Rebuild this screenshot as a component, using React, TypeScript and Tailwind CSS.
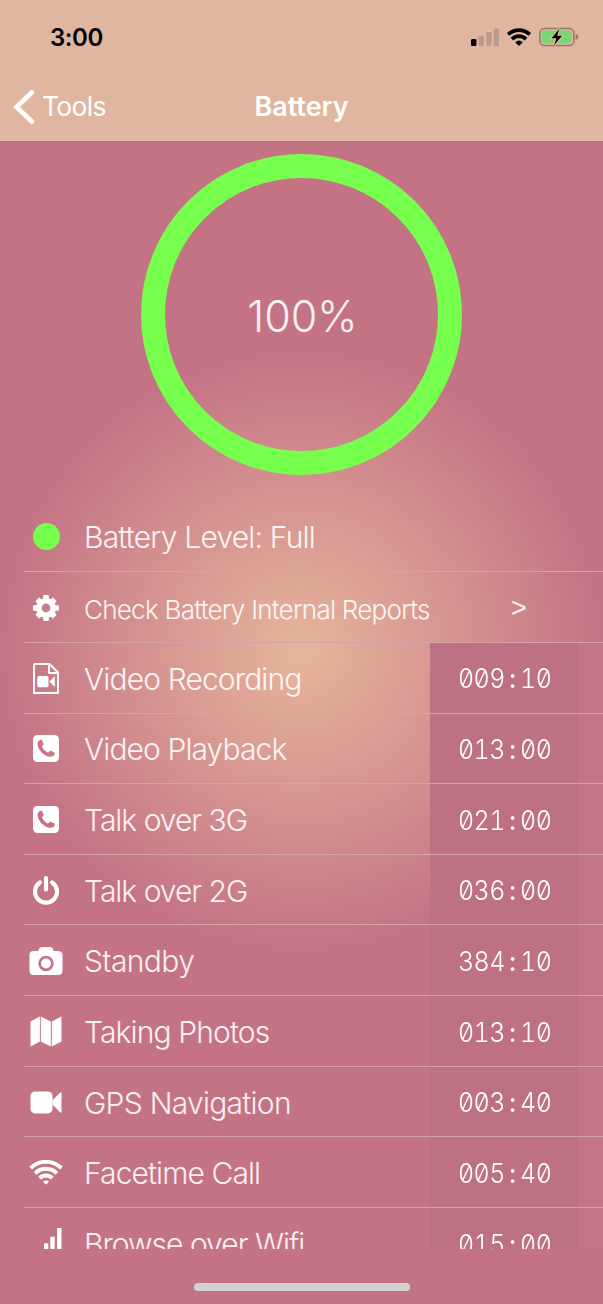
import type { ReactNode } from "react";

const Gear = () => (
  <svg viewBox="0 0 26 26" className="h-[26px] w-[26px]">
    <mask id="gear-hole" maskUnits="userSpaceOnUse" x="0" y="0" width="26" height="26">
      <rect width="26" height="26" fill="#fff" />
      <circle cx="13" cy="13" r="4.4" fill="#000" />
    </mask>
    <g fill="#fff" mask="url(#gear-hole)">
      {[0, 45, 90, 135].map((a) => (
        <rect key={a} x="10.2" y={a % 90 ? 0.6 : 0} width="5.6" height={a % 90 ? 24.8 : 26} rx="1" transform={`rotate(${a} 13 13)`} />
      ))}
      <circle cx="13" cy="13" r="9.9" />
    </g>
  </svg>
);

const VideoFile = () => (
  <svg viewBox="0 0 26 31" className="h-[31px] w-[26px]">
    <path d="M2 1H16.5L25 9.5V30H1V2Q1 1 2 1ZM16 1.5V10H24.5" fill="none" stroke="#fff" strokeWidth="1.9" strokeLinejoin="round" />
    <rect x="4.3" y="13.1" width="11.2" height="11.2" rx="1.8" fill="#fff" />
    <path d="M16.4 18.6L21.8 13.2V24Z" fill="#fff" />
  </svg>
);

const PhoneSquare = () => (
  <svg viewBox="0 0 26 27" className="h-[27px] w-[26px]">
    <path
      fillRule="evenodd"
      fill="#fff"
      d="M5 0H21Q26 0 26 5V22Q26 27 21 27H5Q0 27 0 22V5Q0 0 5 0ZM6.9 5C5.3 5.6 4.4 7.4 4.6 9.4C5.1 13.4 7.6 17 11 19.4C13.6 21.2 16.5 22.1 18.8 21.6C20.6 21.2 21.7 19.9 21.7 18.2C21.7 17.6 21.2 17.4 20.4 17L18 15.8C17.1 15.4 16.8 15.9 16.2 16.6C15.4 17.5 15.1 17.7 14.2 17.2C12.1 16 10.3 14.1 9.2 12C8.8 11.2 9.1 10.9 9.9 10.2C10.5 9.7 10.8 9.4 10.5 8.6L9.3 5.7C9 4.9 8.8 4.6 8.3 4.6C7.8 4.6 7.4 4.8 6.9 5Z"
    />
  </svg>
);

const Power = () => (
  <svg viewBox="0 0 26 29" className="h-[29px] w-[26px]">
    <path d="M6.9 6.4A11 11 0 1 0 19.1 6.4" fill="none" stroke="#fff" strokeWidth="4.2" strokeLinecap="round" />
    <path d="M13 2.2V13.4" stroke="#fff" strokeWidth="4.2" strokeLinecap="round" />
  </svg>
);

const Camera = () => (
  <svg viewBox="0 0 34 28" className="h-[28px] w-[34px]">
    <path
      fillRule="evenodd"
      fill="#fff"
      d="M4.5 4H9.2L10.3 1.5Q10.9 0 12.5 0H21.5Q23.1 0 23.7 1.5L24.8 4H29Q33.5 4 33.5 8.2V24Q33.5 28 29 28H4.5Q.5 28 .5 24V8.2Q.5 4 4.5 4ZM17 8.8A7.7 7.7 0 1 0 17 24.2A7.7 7.7 0 1 0 17 8.8Z"
    />
    <circle cx="17" cy="16.5" r="5" fill="#fff" />
  </svg>
);

const MapIcon = () => (
  <svg viewBox="0 0 32 31" className="h-[31px] w-[32px]">
    <path fill="#fff" d="M.5 5.6L9.9.5V25.6L.5 30.6ZM10.8 .5L20.8 5.6V30.6L10.8 25.6ZM21.8 5.6L31.5.5V25.6L21.8 30.6Z" />
  </svg>
);

const VideoCam = () => (
  <svg viewBox="0 0 32 23" className="h-[23px] w-[32px]">
    <rect x=".5" y=".4" width="22" height="22" rx="4.5" fill="#fff" />
    <path d="M22.5 9.3L30.3 1.5Q31.5.7 31.5 2V20.9Q31.5 22.2 30.3 21.4L22.5 13.6Z" fill="#fff" />
  </svg>
);

const Wifi = () => (
  <svg viewBox="0 0 34 25" className="h-[25px] w-[34px]">
    <g fill="none" stroke="#fff" strokeWidth="4">
      <path d="M1.6 8.2A21.8 21.8 0 0 1 32.4 8.2" />
      <path d="M6.2 13.3A15.2 15.2 0 0 1 27.8 13.3" />
      <path d="M10.6 18A9.2 9.2 0 0 1 23.4 18" />
    </g>
    <path d="M14 21.6Q17 19.4 20 21.6L17.8 24Q17 24.8 16.2 24Z" fill="#fff" />
  </svg>
);

const Bars = () => (
  <svg viewBox="0 0 32 30" className="h-[30px] w-[32px]">
    <path fill="#fff" d="M.5 25.5H4.8V29.5H.5ZM7 21.5H11.3V29.5H7ZM14 15.3H18.3V29.5H14ZM20.3 8.7H24.7V29.5H20.3ZM27 0H31.5V29.5H27Z" />
  </svg>
);

type Row = { icon: ReactNode; label: string; labelClass: string; time: string };

const rows: Row[] = [
  { icon: <VideoFile />, label: "Video Recording", labelClass: "tracking-[-0.87px]", time: "009:10" },
  { icon: <PhoneSquare />, label: "Video Playback", labelClass: "tracking-[-0.9px]", time: "013:00" },
  { icon: <PhoneSquare />, label: "Talk over 3G", labelClass: "tracking-[-1px]", time: "021:00" },
  { icon: <Power />, label: "Talk over 2G", labelClass: "tracking-[-1px]", time: "036:00" },
  { icon: <Camera />, label: "Standby", labelClass: "tracking-[-0.6px]", time: "384:10" },
  { icon: <MapIcon />, label: "Taking Photos", labelClass: "tracking-[-0.87px]", time: "013:10" },
  { icon: <VideoCam />, label: "GPS Navigation", labelClass: "tracking-[-0.72px]", time: "003:40" },
  { icon: <Wifi />, label: "Facetime Call", labelClass: "tracking-[-0.9px]", time: "005:40" },
  { icon: <Bars />, label: "Browse over Wifi", labelClass: "tracking-[-0.98px]", time: "015:00" },
];

const rowClass = "ml-6 flex h-[70.65px] shrink-0 items-stretch border-b border-[#d3a3a9]";
const iconClass = "flex w-11 shrink-0 items-center justify-center pt-[1px]";
const labelBase = "flex shrink-0 items-center pl-[16px] whitespace-nowrap font-light text-white/90";

const Time = ({ value }: { value: string }) => {
  const [hours, minutes] = value.split(":");
  return (
    <div className="flex w-[148px] shrink-0 items-center bg-[#bf7184] pt-[4px] pl-[28px] text-[27px] font-[350] tracking-[-0.6px] text-white [font-feature-settings:'zero','tnum']">
      <span className="origin-left scale-x-[0.925]">
        {hours}
        <span className="inline-block w-[16.5px] text-center font-medium">:</span>
        {minutes}
      </span>
    </div>
  );
};

export default function App() {
  return (
    <div className="flex h-[1304px] w-[603px] flex-col overflow-hidden bg-[#c47385] bg-[radial-gradient(circle_302px_at_302px_651px,#e7b59c_0%,#c47385_100%)] font-['Inter',sans-serif]">
      <header className="flex h-[142px] shrink-0 flex-col border-b border-[#b96f7c] bg-[#e0b6a0]">
        <div className="flex h-[74px] items-center justify-between pr-[24px] pl-[50px]">
          <span className="pt-px text-[24px] font-semibold tracking-[-0.4px] text-black">3:00</span>
          <div className="flex items-center gap-[8px]">
            <svg viewBox="0 0 28 18" className="h-[18px] w-[28px]">
              <rect x="0" y="11" width="5.4" height="7" rx="1.3" fill="#000" />
              <g fill="#bd9a89">
                <rect x="7.7" y="8" width="5.2" height="10" rx="1.3" />
                <rect x="15.3" y="4" width="5.2" height="14" rx="1.3" />
                <rect x="22.8" y="0.4" width="5.2" height="17.6" rx="1.3" />
              </g>
            </svg>
            <svg viewBox="0 0 24 18" className="h-[18px] w-[24px]">
              <g fill="none" stroke="#000" strokeWidth="3.7">
                <path d="M1.2 6.4A15.6 15.6 0 0 1 22.8 6.4" />
                <path d="M5 11.1A9.8 9.8 0 0 1 19 11.1" />
              </g>
              <path d="M8.2 14.2Q12 11 15.8 14.2L12.5 17.5Q12 18 11.5 17.5Z" fill="#000" />
            </svg>
            <svg viewBox="0 0 40 20" className="h-[20px] w-[40px]">
              <rect x="0.9" y="1.5" width="34" height="17" rx="4.6" fill="none" stroke="#97766c" strokeWidth="1.5" />
              <rect x="3" y="3.6" width="29.8" height="12.8" rx="2.8" fill="#77d872" />
              <path d="M36.7 7.1Q39.2 7.8 39.2 10Q39.2 12.2 36.7 12.9Z" fill="#97766c" />
              <path d="M20.3 1.8L12.6 11.2H17.4L15.2 18.2L23 8.8H18.2Z" fill="#000" stroke="#e0b6a0" strokeWidth="2.2" paintOrder="stroke" />
            </svg>
          </div>
        </div>
        <nav className="grid h-[66px] grid-cols-[1fr_auto_1fr] items-center">
          <button className="flex items-center gap-[7px] pl-[13px] text-white">
            <svg viewBox="0 0 22 34" className="h-[34px] w-[22px]">
              <path d="M18.8 2.5L3.4 17L18.8 31.5" fill="none" stroke="#fff" strokeWidth="4.8" strokeLinecap="round" strokeLinejoin="miter" />
            </svg>
            <span className="text-[26.5px] tracking-[-0.7px]">Tools</span>
          </button>
          <h1 className="text-[27px] font-semibold tracking-[0px] text-white">Battery</h1>
        </nav>
      </header>

      <section className="flex h-[359.6px] shrink-0 justify-center pt-[12px]">
        <div className="flex h-[321px] w-[321px] items-center justify-center rounded-full border-[24px] border-[#76ff4c]">
          <span className="pt-1 pl-[2px] text-[43px] font-light tracking-[0px] text-white/90">100%</span>
        </div>
      </section>

      <main className="flex h-[747.8px] shrink-0 flex-col overflow-hidden">
        <div className={rowClass}>
          <div className={iconClass}>
            <span className="h-[27px] w-[27px] rounded-full bg-[#76ff4c]" />
          </div>
          <div className={`${labelBase} pt-[2px] text-[30px] tracking-[-0.8px]`}>Battery Level: Full</div>
        </div>
        <div className={rowClass}>
          <div className={iconClass}><Gear /></div>
          <div className={`${labelBase} w-[434px] pt-[4px] text-[26px] tracking-[-0.73px]`}>Check Battery Internal Reports</div>
          <div className="flex items-center pl-[9px] pt-[2px] font-['Liberation_Sans',sans-serif] text-[27px] text-white/90">&gt;</div>
        </div>
        {rows.map((row) => (
          <div key={row.label} className={rowClass}>
            <div className={iconClass}>{row.icon}</div>
            <div className={`${labelBase} w-[362px] pt-[3px] text-[30px] ${row.labelClass}`}>{row.label}</div>
            <Time value={row.time} />
            <div className="flex-1 bg-[#c37485]/60" />
          </div>
        ))}
      </main>

      <footer className="flex flex-1 justify-center pt-[33.6px]">
        <div className="h-[8px] w-[216px] rounded-full bg-[#d3d2d3]" />
      </footer>
    </div>
  );
}
